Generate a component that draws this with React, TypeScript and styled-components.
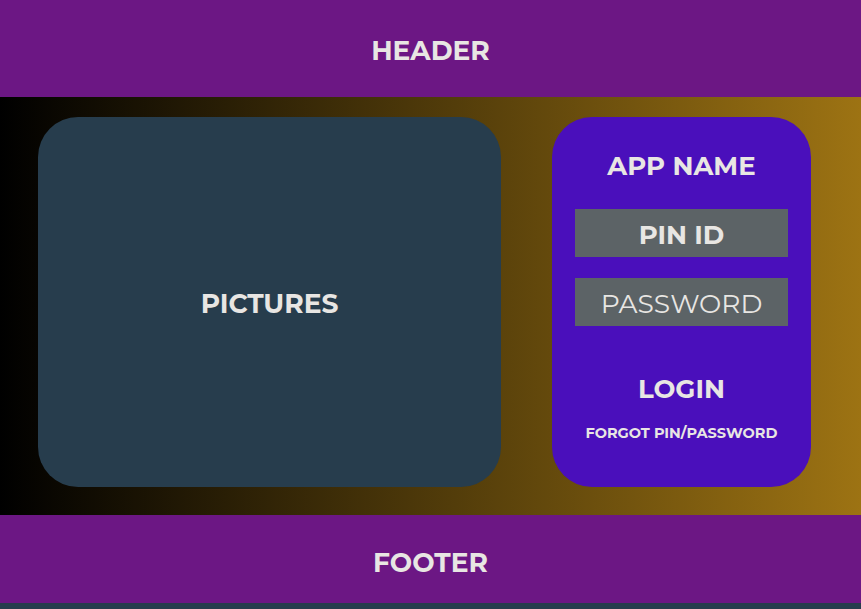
import React from "react"
import styled, { createGlobalStyle } from "styled-components"

const GlobalStyle = createGlobalStyle`
  html, body {
    margin: 0;
    padding: 0;
    background: #263d4d;
  }

  body {
    font-family: "Montserrat", "Open Sans", "DejaVu Sans", sans-serif;
    color: #e8e6e3;
  }
`

export default function App() {
  return (
    <>
      <GlobalStyle/>
      <Page>
        <Bar>HEADER</Bar>
        <Main>
          <Pictures>PICTURES</Pictures>
          <LoginCard>
            <AppName>APP NAME</AppName>
            <Field $bold>PIN ID</Field>
            <Field>PASSWORD</Field>
            <LoginButton>LOGIN</LoginButton>
            <Forgot>FORGOT PIN/PASSWORD</Forgot>
          </LoginCard>
        </Main>
        <Bar $footer>FOOTER</Bar>
      </Page>
    </>
  )
}

const Page = styled.div`
  display: flex;
  flex-direction: column;
  width: 861px;
`

const Bar = styled.header<{ readonly $footer?: boolean }>`
  align-items: center;
  background: #6c1784;
  box-sizing: border-box;
  display: flex;
  font-size: 26.5px;
  font-weight: 700;
  height: ${({ $footer }) => $footer ? "88px" : "97px"};
  justify-content: center;
  padding-top: ${({ $footer }) => $footer ? "7px" : "4px"};
`

const Main = styled.main`
  background: linear-gradient(to right, #000000 0%, #9d7313 100%);
  box-sizing: border-box;
  display: grid;
  gap: 51px;
  grid-template-columns: 463px 259px;
  height: 418px;
  padding: 20px 0 28px 38px;
`

const Pictures = styled.section`
  align-items: center;
  background: #273d4d;
  border-radius: 40px;
  display: flex;
  font-size: 26.5px;
  font-weight: 700;
  justify-content: center;
  padding-top: 2px;
`

const LoginCard = styled.section`
  align-items: center;
  background: #4a0fbb;
  border-radius: 40px;
  display: flex;
  flex-direction: column;
  padding: 31px 23px 0;
`

const AppName = styled.h1`
  font-size: 26px;
  font-weight: 700;
  line-height: 36px;
  margin: 0 0 25px;
`

const Field = styled.div<{ readonly $bold?: boolean }>`
  align-items: center;
  align-self: stretch;
  background: #5c6366;
  display: flex;
  font-size: ${({ $bold }) => $bold ? "26px" : "26.5px"};
  font-weight: ${({ $bold }) => $bold ? 700 : 400};
  height: 48px;
  justify-content: center;
  margin-bottom: 21px;
  padding-top: 3px;
  box-sizing: border-box;
`

const LoginButton = styled.div`
  font-size: 26px;
  font-weight: 700;
  line-height: 36px;
  margin-top: 24px;
`

const Forgot = styled.div`
  font-size: 14.5px;
  font-weight: 700;
  margin-top: 17px;
`
